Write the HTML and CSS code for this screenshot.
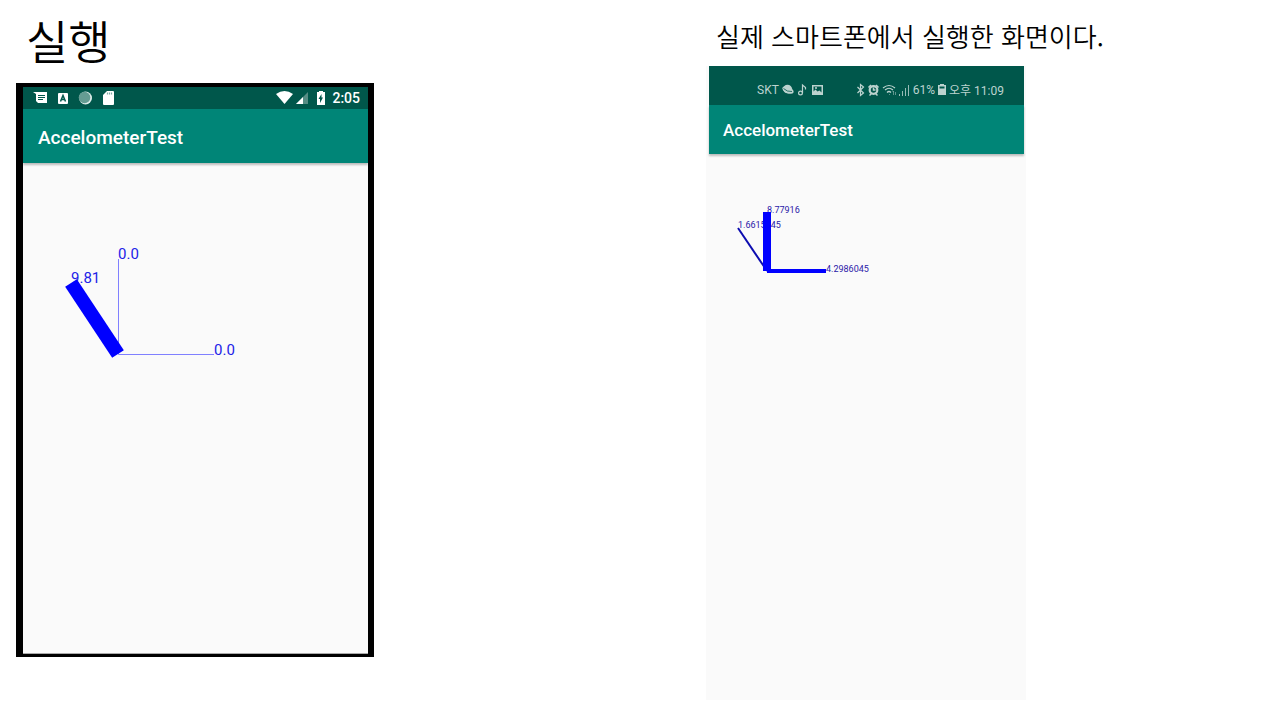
FILE: index.html
```
<!DOCTYPE html>
<html lang="ko">
<head>
<meta charset="utf-8">
<title>실행</title>
<link rel="stylesheet" href="styles.css">
</head>
<body>
<main class="slide">
  <section class="emulator">
    <h1 class="title">실행</h1>
    <div class="frame">
      <div class="status">
        <svg class="icons" width="88" height="16" viewBox="0 0 88 16">
          <path fill="#fff" d="M0 2h14v11H5l-2-2V4z"/>
          <path stroke="#00574b" stroke-width="1" d="M5 5.500h7M5 7.500h7M5 9.500h5"/>
          <rect x="25" y="3" width="10" height="11" rx="1" fill="#fff"/>
          <path fill="none" stroke="#00574b" stroke-width="1.500" d="M27.500 11.500L30 5.500l2.500 6M28.500 9.500h3"/>
          <circle cx="52.500" cy="8" r="6.500" fill="#dcebe8"/>
          <circle cx="51.500" cy="7.500" r="5.800" fill="#659c93"/>
          <path fill="#fff" d="M74 1h6q1 0 1 1v12q0 1-1 1h-9q-1 0-1-1V5z"/>
          <path stroke="#7faaa4" stroke-width="1.200" d="M74.500 2.500v2M76.500 2.500v2M78.500 2.500v2"/>
        </svg>
        <svg class="icons right" width="50" height="16" viewBox="0 0 50 16">
          <path fill="#fff" d="M0 4Q8.500-2 17 4L8.500 14z"/>
          <path fill="#568c84" d="M32 2v12H20z"/>
          <path fill="#fff" d="M27 7v7h-7z"/>
          <path fill="#fff" d="M43 1h4v1h2v13h-8V2h2z"/>
          <path fill="#00574b" d="M45.500 4L42.500 9H44v4l3-5.500h-1.500z"/>
        </svg>
        <span class="clock">2:05</span>
      </div>
      <div class="appbar">AccelometerTest</div>
      <svg class="plot" viewBox="0 0 345 490">
        <g class="values">
          <text x="95" y="96">0.0</text>
          <text x="48" y="120">9.81</text>
          <text x="191" y="192">0.0</text>
        </g>
        <path class="hair" d="M95.500 96v95.500H191"/>
        <path class="bar" stroke-width="14" d="M48 120l47 71"/>
      </svg>
    </div>
  </section>

  <section class="device">
    <h2 class="caption">실제 스마트폰에서 실행한 화면이다.</h2>
    <div class="screen">
      <div class="status">
        <span>SKT</span>
        <svg class="icons" width="44" height="14" viewBox="2 0 44 14">
          <g fill="#bcd3cf">
            <ellipse cx="7.500" cy="6" rx="4.500" ry="4.200"/>
            <ellipse cx="8" cy="7" rx="6" ry="3.200" transform="rotate(25 8 7)"/>
            <path fill="none" stroke="#00574b" stroke-width=".8" d="M3.500 5.500Q7 9 12 8.500"/>
            <circle cx="20.500" cy="10" r="1.900" fill="none" stroke="#bcd3cf" stroke-width="1.200"/>
            <path fill="none" stroke="#bcd3cf" stroke-width="1.200" d="M22.500 10V2l3 2.500v2"/>
            <path fill-rule="evenodd" d="M32 2h11v10H32zM33.500 3.500v5l2-2 2 2 2-1 2 2v-6z"/>
            <circle cx="36" cy="5" r="1"/>
          </g>
        </svg>
        <svg class="icons right" width="54" height="14" viewBox="0 0 54 14">
          <g fill="none" stroke="#bcd3cf" stroke-width="1.200">
            <path d="M1.500 4l6 6L4.500 12.500v-11L7.500 4l-6 6"/>
            <circle cx="17.500" cy="7" r="3.800" stroke-width="2.200"/>
            <path d="M17.500 4.500V7h2M12.500 4.500L15 2M20 2l2.500 2.500M13.500 12.500l2-2M21.500 12.500l-2-2" stroke-width="1.500"/>
            <path d="M27 5q6-5 12 0M29 7q4-3.500 8 0M31 9.500q2-2 4 0" stroke-width="1.200"/>
            <path d="M33 11.500h1M37.500 8v4M36.500 9l1-1M39.500 9v3" stroke-width="1" opacity=".5"/>
            <path d="M43.500 11v2M46.500 8v5M49.500 5v8M52.500 2v11" stroke-width="1" opacity=".8"/>
          </g>
        </svg>
        <span>61%</span>
        <svg class="icons" width="8" height="14" viewBox="0 0 8 14">
          <path fill="#bcd3cf" fill-rule="evenodd" d="M2 1h4v1h2v10H0V2h2zM1.500 3.500v2h5v-2z"/>
        </svg>
        <span>오후 11:09</span>
      </div>
      <div class="appbar">AccelometerTest</div>
      <svg class="plot" viewBox="0 0 320 546">
        <g class="values">
          <text x="61" y="59">8.77916</text>
          <text x="32" y="74">1.6615345</text>
          <text x="120" y="118">4.2986045</text>
        </g>
        <path class="thin" d="M32 74l29 43"/>
        <path class="bar" stroke-width="8" d="M61 58v59"/>
        <path class="bar" stroke-width="4" d="M61 117h59"/>
      </svg>
    </div>
  </section>
</main>
</body>
</html>
```
FILE: styles.css
```
* { box-sizing: border-box; }

body {
  margin: 0;
  background: #fff;
  color: #000;
  font-family: Roboto, "Noto Sans CJK KR", sans-serif;
}

.slide {
  display: grid;
  grid-template-columns: minmax(0, 358fr) minmax(0, 332fr) minmax(0, 320fr) minmax(0, 254fr);
  padding: 0 0 20px 16px;
}

.device { grid-column: 3; }

.title,
.caption {
  margin: 0;
  font-family: "Noto Sans CJK KR", sans-serif;
  font-weight: 350;
  white-space: nowrap;
}

.title {
  padding: 7px 0 12px 10px;
  font-size: 46px;
  line-height: 64px;
}

.caption {
  padding: 16px 0 10px 10px;
  font-size: 26px;
  line-height: 40px;
}

.frame {
  background: #fafafa;
  border: solid #000;
  border-width: 4px 6px 3px 7px;
}

.status {
  display: flex;
  align-items: center;
  background: #00574b;
}

.icons { flex: none; }
.right { margin-left: auto; }

.appbar {
  background: #008577;
  color: #fff;
  font-weight: 500;
  box-shadow: 0 2px 2px rgba(0, 0, 0, .25);
}

.plot {
  display: block;
  width: 100%;
}

.bar {
  fill: none;
  stroke: #00f;
}

.emulator .status {
  height: 22px;
  padding: 0 8px 0 10px;
  color: #fff;
}

.clock {
  margin-left: 6px;
  font-size: 14px;
  font-weight: 500;
}

.emulator .appbar {
  padding: 3px 0 0 15px;
  font-size: 19px;
  line-height: 51px;
}

.emulator .plot { border-bottom: 1px solid #aaa; }

.emulator .values {
  fill: #2222e8;
  font-size: 15px;
}

.hair {
  fill: none;
  stroke: #8080ff;
  stroke-width: 1;
}

.screen { background: #fafafa; }

.device .status {
  gap: 3px;
  height: 39px;
  margin: 0 2px 0 3px;
  padding: 8px 20px 0 48px;
  color: #bcd3cf;
  font-size: 12px;
  white-space: nowrap;
}

.device .appbar {
  margin: 0 2px 0 3px;
  padding: 2px 0 0 14px;
  font-size: 17px;
  line-height: 47px;
}

.device .values {
  fill: #2a20a8;
  font-size: 9px;
}

.thin {
  fill: none;
  stroke: #0c0cb0;
  stroke-width: 2;
}
```
